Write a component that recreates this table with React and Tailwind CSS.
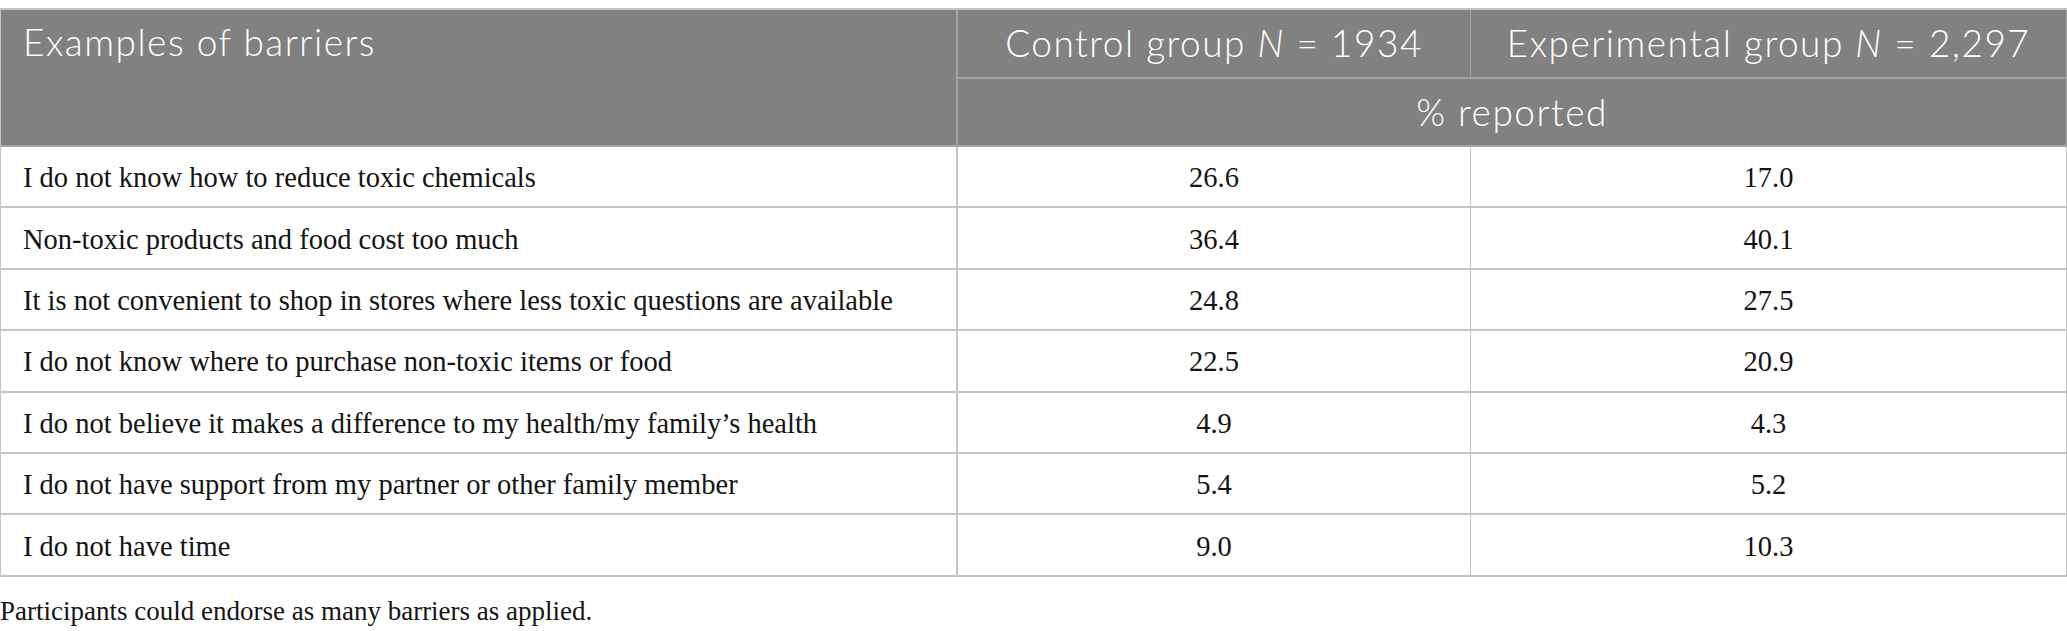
import React from "react";

const rows = [
  ["I do not know how to reduce toxic chemicals", "26.6", "17.0"],
  ["Non-toxic products and food cost too much", "36.4", "40.1"],
  ["It is not convenient to shop in stores where less toxic questions are available", "24.8", "27.5"],
  ["I do not know where to purchase non-toxic items or food", "22.5", "20.9"],
  ["I do not believe it makes a difference to my health/my family\u2019s health", "4.9", "4.3"],
  ["I do not have support from my partner or other family member", "5.4", "5.2"],
  ["I do not have time", "9.0", "10.3"],
];

const sans = { fontFamily: "Lato, 'Open Sans', sans-serif" };
const serif = { fontFamily: "'Liberation Serif', 'Times New Roman', serif" };

export default function App() {
  return (
    <div className="w-[2067px] bg-white pt-2">
      <table className="w-full table-fixed border-separate border-spacing-0 border-t-2 border-l border-[#c4c4c4]">
        <thead className="text-[37px] leading-[44px] font-light tracking-[1.5px] text-white" style={sans}>
          <tr className="h-[69px]">
            <th
              rowSpan={2}
              className="w-[957px] border-r-2 border-b-2 border-[#a3a4a3] bg-[#808180] px-[22px] pt-[10px] text-left align-top font-light"
            >
              Examples of barriers
            </th>
            <th className="w-[513px] border-r border-b-2 border-[#a3a4a3] bg-[#808180] pb-[2px] text-center align-middle font-light">
              Control group <i>N</i> = 1934
            </th>
            <th className="border-r border-b-2 border-[#a3a4a3] bg-[#808180] pb-[2px] text-center align-middle font-light">
              Experimental group <i>N</i> = 2,297
            </th>
          </tr>
          <tr className="h-[68px]">
            <th
              colSpan={2}
              className="border-r border-b-2 border-[#a3a4a3] bg-[#808180] text-center align-middle font-light"
            >
              % reported
            </th>
          </tr>
        </thead>
        <tbody style={serif} className="text-[28.5px] text-[#141414]">
          {rows.map((r, i) => (
            <tr key={i} className="h-[61.4px]">
              <td className="border-r-2 border-b-2 border-[#c4c4c4] px-[22px] pt-[4px] text-left align-middle">{r[0]}</td>
              <td className="border-r border-b-2 border-[#c4c4c4] pt-[4px] text-center align-middle">{r[1]}</td>
              <td className="border-r border-b-2 border-[#c4c4c4] pt-[4px] text-center align-middle">{r[2]}</td>
            </tr>
          ))}
        </tbody>
      </table>
      <p className="mt-[18px] text-[27px] leading-[32px] text-[#141414]" style={serif}>
        Participants could endorse as many barriers as applied.
      </p>
    </div>
  );
}
